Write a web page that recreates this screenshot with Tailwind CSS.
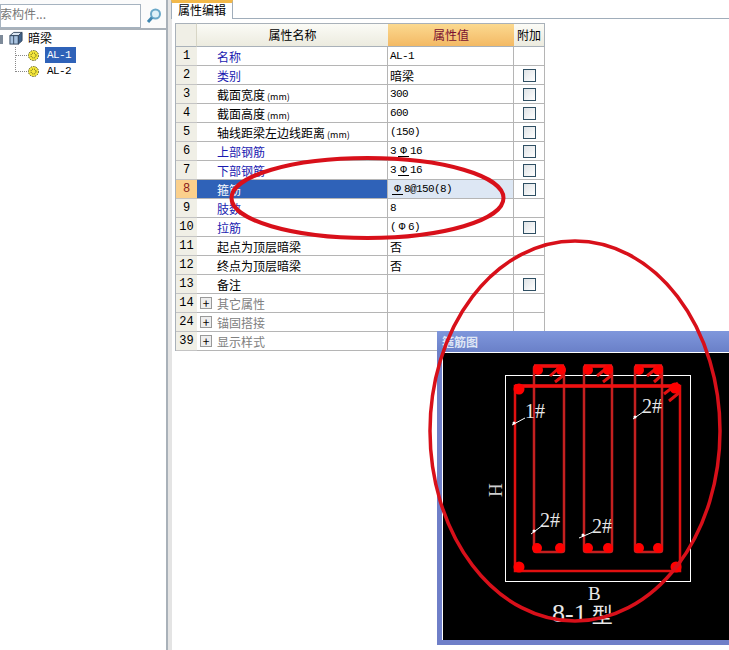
<!DOCTYPE html>
<html lang="en">
<head>
  <meta charset="UTF-8" />
  <title>属性编辑</title>
  <script src="https://cdn.jsdelivr.net/npm/@tailwindcss/browser@4"></script>
</head>
<body class="bg-white">
  <div class="relative w-[729px] h-[650px] overflow-hidden flex text-[12px] leading-[19px] text-black font-['Noto_Sans_CJK_SC',sans-serif]">

    <!-- left tree panel -->
    <div class="w-[166px] h-full shrink-0 flex flex-col">
      <div class="h-[30px] flex items-start bg-[#fbfbfb] border-b-2 border-[#a9b1b9]">
        <div class="w-[141px] h-[24px] mt-[4px] bg-white border border-[#a6b3c0] overflow-hidden whitespace-nowrap leading-[18px] text-[#777] -indent-[1px]">索构件...</div>
        <svg class="ml-[5px] mt-[8px]" width="16" height="16" viewBox="0 0 16 16"><circle cx="9.500" cy="6" r="4.500" fill="#dff1f8" stroke="#6aa8c8" stroke-width="2"/><path d="M6 9.500 L2 14" stroke="#3f86b0" stroke-width="3"/></svg>
      </div>
      <div class="relative flex-1">
        <div class="absolute left-0 top-[5px] w-[3px] h-[9px] bg-[#7d8a99]"></div>
        <div class="flex items-center h-[16px] pl-[9px] gap-[5px]">
          <svg width="14" height="14" viewBox="0 0 15 15"><path d="M1 5 L5 1.500 H14 L10 5 Z" fill="#dbe6f2" stroke="#33475f"/><rect x="1" y="5" width="9" height="9" fill="#a9c3e0" stroke="#33475f"/><path d="M10 5 L14 1.500 V10.500 L10 14 Z" fill="#41638c" stroke="#33475f"/><path d="M5 5 V14" stroke="#33475f"/></svg>
          <span class="text-[12px] -mt-[2px]">暗梁</span>
        </div>
        <div class="absolute left-[15px] top-[17px] h-[25px] w-[12px] border-l border-b border-dotted border-[#888]"></div>
        <div class="absolute left-[16px] top-[25px] w-[11px] border-b border-dotted border-[#888]"></div>
        <div class="flex items-center h-[16px] mt-[1px] pl-[28px] gap-[6px]">
          <svg width="11" height="11" viewBox="0 0 11 11"><circle cx="5.500" cy="5.500" r="5" fill="#f6e83c"/><circle cx="5.500" cy="5.500" r="5" fill="none" stroke="#5a5a20" stroke-width="1" stroke-dasharray="1.500 1"/><circle cx="5.500" cy="5.500" r="2.500" fill="#f6e83c" stroke="#4a4a18" stroke-width="1" stroke-dasharray="1 1"/></svg>
          <span class="bg-[#2f62b8] text-white h-[16px] w-[31px] leading-[16px] font-['Liberation_Mono',monospace] text-[11px] tracking-[-0.6px] pl-[2px]">AL-1</span>
        </div>
        <div class="flex items-center h-[16px] pl-[28px] gap-[6px]">
          <svg width="11" height="11" viewBox="0 0 11 11"><circle cx="5.500" cy="5.500" r="5" fill="#f6e83c"/><circle cx="5.500" cy="5.500" r="5" fill="none" stroke="#5a5a20" stroke-width="1" stroke-dasharray="1.500 1"/><circle cx="5.500" cy="5.500" r="2.500" fill="#f6e83c" stroke="#4a4a18" stroke-width="1" stroke-dasharray="1 1"/></svg>
          <span class="w-[31px] leading-[16px] font-['Liberation_Mono',monospace] text-[11px] tracking-[-0.6px] pl-[2px]">AL-2</span>
        </div>
      </div>
    </div>

    <!-- splitter -->
    <div class="w-[6px] h-full bg-[#e4e4e4] border-l-2 border-[#a9b1b9]"></div>

    <!-- property editor -->
    <div class="flex-1 flex flex-col">
      <div class="h-[19px] flex border-b border-[#a0adba]">
        <div class="-ml-[1px] w-[62px] h-[19px] bg-white border-x border-[#a0adba] border-t-[3px] border-t-[#f2b84a] pl-[6px] leading-[13px] text-[12px]">属性编辑</div>
      </div>
      <div class="pl-[3px] pt-[4px]">
        <div class="w-[370px] grid grid-cols-[21px_191px_126px_31px] border-l border-[#a9b1b9]">
          <div class="h-[24px] bg-[#f0efe6] border-y border-[#a9b1b9] border-r border-r-[#d8d6c6]"></div>
          <div class="h-[24px] bg-gradient-to-b from-[#fbfbf6] to-[#ecebdf] border-y border-[#a9b1b9] text-center leading-[22px]">属性名称</div>
          <div class="h-[24px] bg-gradient-to-b from-[#fbd98f] to-[#f3b964] border-y border-[#a9b1b9] text-center leading-[22px] text-[#7a1030]">属性值</div>
          <div class="h-[24px] bg-gradient-to-b from-[#fbfbf6] to-[#ecebdf] border-y border-r border-[#a9b1b9] text-center leading-[22px]">附加</div>

          <!-- row 1 -->
          <div class="h-[19px] bg-[#f0efe6] border-b border-[#c4c4c4] text-center font-['Liberation_Mono',monospace]">1</div>
          <div class="h-[19px] border-b border-r border-[#b5b5b5] pl-[20px] text-[#1a1ab0]">名称</div>
          <div class="h-[19px] border-b border-r border-[#b5b5b5] pl-[2px] font-['Liberation_Mono',monospace] text-[11px] tracking-[-0.6px]">AL-1</div>
          <div class="h-[19px] border-b border-r border-[#b5b5b5]"></div>
          <!-- row 2 -->
          <div class="h-[19px] bg-[#f0efe6] border-b border-[#c4c4c4] text-center font-['Liberation_Mono',monospace]">2</div>
          <div class="h-[19px] border-b border-r border-[#b5b5b5] pl-[20px] text-[#1a1ab0]">类别</div>
          <div class="h-[19px] border-b border-r border-[#b5b5b5] pl-[2px]">暗梁</div>
          <div class="h-[19px] border-b border-r border-[#b5b5b5] flex items-center justify-center"><span class="w-[13px] h-[13px] border border-[#2f4f63] bg-gradient-to-br from-[#dfe3e6] to-white"></span></div>
          <!-- row 3 -->
          <div class="h-[19px] bg-[#f0efe6] border-b border-[#c4c4c4] text-center font-['Liberation_Mono',monospace]">3</div>
          <div class="h-[19px] border-b border-r border-[#b5b5b5] pl-[20px]">截面宽度<span class="ml-[2px] text-[9px]">(mm)</span></div>
          <div class="h-[19px] border-b border-r border-[#b5b5b5] pl-[2px] font-['Liberation_Mono',monospace] text-[11px] tracking-[-0.6px]">300</div>
          <div class="h-[19px] border-b border-r border-[#b5b5b5] flex items-center justify-center"><span class="w-[13px] h-[13px] border border-[#2f4f63] bg-gradient-to-br from-[#dfe3e6] to-white"></span></div>
          <!-- row 4 -->
          <div class="h-[19px] bg-[#f0efe6] border-b border-[#c4c4c4] text-center font-['Liberation_Mono',monospace]">4</div>
          <div class="h-[19px] border-b border-r border-[#b5b5b5] pl-[20px]">截面高度<span class="ml-[2px] text-[9px]">(mm)</span></div>
          <div class="h-[19px] border-b border-r border-[#b5b5b5] pl-[2px] font-['Liberation_Mono',monospace] text-[11px] tracking-[-0.6px]">600</div>
          <div class="h-[19px] border-b border-r border-[#b5b5b5] flex items-center justify-center"><span class="w-[13px] h-[13px] border border-[#2f4f63] bg-gradient-to-br from-[#dfe3e6] to-white"></span></div>
          <!-- row 5 -->
          <div class="h-[19px] bg-[#f0efe6] border-b border-[#c4c4c4] text-center font-['Liberation_Mono',monospace]">5</div>
          <div class="h-[19px] border-b border-r border-[#b5b5b5] pl-[20px]">轴线距梁左边线距离<span class="ml-[2px] text-[9px]">(mm)</span></div>
          <div class="h-[19px] border-b border-r border-[#b5b5b5] pl-[2px] font-['Liberation_Mono',monospace] text-[11px] tracking-[-0.6px]">(150)</div>
          <div class="h-[19px] border-b border-r border-[#b5b5b5] flex items-center justify-center"><span class="w-[13px] h-[13px] border border-[#2f4f63] bg-gradient-to-br from-[#dfe3e6] to-white"></span></div>
          <!-- row 6 -->
          <div class="h-[19px] bg-[#f0efe6] border-b border-[#c4c4c4] text-center font-['Liberation_Mono',monospace]">6</div>
          <div class="h-[19px] border-b border-r border-[#b5b5b5] pl-[20px] text-[#1a1ab0]">上部钢筋</div>
          <div class="h-[19px] border-b border-r border-[#b5b5b5] pl-[2px] font-['Liberation_Mono',monospace] text-[11px] tracking-[-0.6px]">3<span class="inline-block w-[11px] h-[11px] ml-[2px] mr-[1px] leading-[10px] text-center border-b border-black tracking-normal">Φ</span>16</div>
          <div class="h-[19px] border-b border-r border-[#b5b5b5] flex items-center justify-center"><span class="w-[13px] h-[13px] border border-[#2f4f63] bg-gradient-to-br from-[#dfe3e6] to-white"></span></div>
          <!-- row 7 -->
          <div class="h-[19px] bg-[#f0efe6] border-b border-[#c4c4c4] text-center font-['Liberation_Mono',monospace]">7</div>
          <div class="h-[19px] border-b border-r border-[#b5b5b5] pl-[20px] text-[#1a1ab0]">下部钢筋</div>
          <div class="h-[19px] border-b border-r border-[#b5b5b5] pl-[2px] font-['Liberation_Mono',monospace] text-[11px] tracking-[-0.6px]">3<span class="inline-block w-[11px] h-[11px] ml-[2px] mr-[1px] leading-[10px] text-center border-b border-black tracking-normal">Φ</span>16</div>
          <div class="h-[19px] border-b border-r border-[#b5b5b5] flex items-center justify-center"><span class="w-[13px] h-[13px] border border-[#2f4f63] bg-gradient-to-br from-[#dfe3e6] to-white"></span></div>
          <!-- row 8, selected -->
          <div class="h-[19px] bg-[#fbd08c] border-b border-[#c4c4c4] text-center font-['Liberation_Mono',monospace] text-[#8a1c1c]">8</div>
          <div class="h-[19px] bg-[#2f62b8] border-b border-r border-[#b5b5b5] pl-[20px] text-white">箍筋</div>
          <div class="h-[19px] bg-[#dde7f4] border-b border-r border-[#b5b5b5] pl-[4px] font-['Liberation_Mono',monospace] text-[11px] tracking-[-0.6px]"><span class="inline-block w-[11px] h-[11px] mr-[1px] leading-[10px] text-center border-b border-black tracking-normal">Φ</span>8@150(8)</div>
          <div class="h-[19px] border-b border-r border-[#b5b5b5] flex items-center justify-center"><span class="w-[13px] h-[13px] border border-[#2f4f63] bg-gradient-to-br from-[#dfe3e6] to-white"></span></div>
          <!-- row 9 -->
          <div class="h-[19px] bg-[#f0efe6] border-b border-[#c4c4c4] text-center font-['Liberation_Mono',monospace]">9</div>
          <div class="h-[19px] border-b border-r border-[#b5b5b5] pl-[20px] text-[#1a1ab0]">肢数</div>
          <div class="h-[19px] border-b border-r border-[#b5b5b5] pl-[2px] font-['Liberation_Mono',monospace] text-[11px] tracking-[-0.6px]">8</div>
          <div class="h-[19px] border-b border-r border-[#b5b5b5]"></div>
          <!-- row 10 -->
          <div class="h-[19px] bg-[#f0efe6] border-b border-[#c4c4c4] text-center font-['Liberation_Mono',monospace]">10</div>
          <div class="h-[19px] border-b border-r border-[#b5b5b5] pl-[20px] text-[#1a1ab0]">拉筋</div>
          <div class="h-[19px] border-b border-r border-[#b5b5b5] pl-[2px] font-['Liberation_Mono',monospace] text-[11px] tracking-[-0.6px]">(<span class="inline-block w-[12px] text-center tracking-normal">Φ</span>6)</div>
          <div class="h-[19px] border-b border-r border-[#b5b5b5] flex items-center justify-center"><span class="w-[13px] h-[13px] border border-[#2f4f63] bg-gradient-to-br from-[#dfe3e6] to-white"></span></div>
          <!-- row 11 -->
          <div class="h-[19px] bg-[#f0efe6] border-b border-[#c4c4c4] text-center font-['Liberation_Mono',monospace]">11</div>
          <div class="h-[19px] border-b border-r border-[#b5b5b5] pl-[20px]">起点为顶层暗梁</div>
          <div class="h-[19px] border-b border-r border-[#b5b5b5] pl-[2px]">否</div>
          <div class="h-[19px] border-b border-r border-[#b5b5b5]"></div>
          <!-- row 12 -->
          <div class="h-[19px] bg-[#f0efe6] border-b border-[#c4c4c4] text-center font-['Liberation_Mono',monospace]">12</div>
          <div class="h-[19px] border-b border-r border-[#b5b5b5] pl-[20px]">终点为顶层暗梁</div>
          <div class="h-[19px] border-b border-r border-[#b5b5b5] pl-[2px]">否</div>
          <div class="h-[19px] border-b border-r border-[#b5b5b5]"></div>
          <!-- row 13 -->
          <div class="h-[19px] bg-[#f0efe6] border-b border-[#c4c4c4] text-center font-['Liberation_Mono',monospace]">13</div>
          <div class="h-[19px] border-b border-r border-[#b5b5b5] pl-[20px]">备注</div>
          <div class="h-[19px] border-b border-r border-[#b5b5b5]"></div>
          <div class="h-[19px] border-b border-r border-[#b5b5b5] flex items-center justify-center"><span class="w-[13px] h-[13px] border border-[#2f4f63] bg-gradient-to-br from-[#dfe3e6] to-white"></span></div>
          <!-- group rows -->
          <div class="h-[19px] bg-[#f0efe6] border-b border-[#c4c4c4] text-center font-['Liberation_Mono',monospace]">14</div>
          <div class="h-[19px] border-b border-r border-[#b5b5b5] pl-[3px] flex items-center gap-[5px] text-[#808080]"><span class="w-[12px] h-[12px] border border-[#999] bg-[#eee] text-black flex items-center justify-center leading-none">+</span>其它属性</div>
          <div class="h-[19px] border-b border-r border-[#b5b5b5]"></div>
          <div class="h-[19px] border-b border-r border-[#b5b5b5]"></div>
          <div class="h-[19px] bg-[#f0efe6] border-b border-[#c4c4c4] text-center font-['Liberation_Mono',monospace]">24</div>
          <div class="h-[19px] border-b border-r border-[#b5b5b5] pl-[3px] flex items-center gap-[5px] text-[#808080]"><span class="w-[12px] h-[12px] border border-[#999] bg-[#eee] text-black flex items-center justify-center leading-none">+</span>锚固搭接</div>
          <div class="h-[19px] border-b border-r border-[#b5b5b5]"></div>
          <div class="h-[19px] border-b border-r border-[#b5b5b5]"></div>
          <div class="h-[19px] bg-[#f0efe6] border-b border-[#c4c4c4] text-center font-['Liberation_Mono',monospace]">39</div>
          <div class="h-[19px] border-b border-r border-[#b5b5b5] pl-[3px] flex items-center gap-[5px] text-[#808080]"><span class="w-[12px] h-[12px] border border-[#999] bg-[#eee] text-black flex items-center justify-center leading-none">+</span>显示样式</div>
          <div class="h-[19px] border-b border-r border-[#b5b5b5]"></div>
          <div class="h-[19px] border-b border-r border-[#b5b5b5]"></div>
        </div>
      </div>
    </div>

    <!-- floating stirrup window -->
    <div class="absolute left-[437px] top-[331px] w-[300px] h-[314px] bg-[#6f7fc8] flex flex-col pl-[5px] pb-[5px]">
      <div class="h-[21px] -ml-[5px] pl-[5px] bg-gradient-to-b from-[#7f97dc] to-[#6a80c8] text-[#dfe6f5] font-bold leading-[21px]">箍筋图</div>
      <div class="flex-1 bg-black border-t border-l border-white"></div>
    </div>

    <!-- drawing and hand-drawn marks over the window -->
    <svg class="absolute left-0 top-0" width="729" height="650" viewBox="0 0 729 650" fill="none">
      <rect x="505.500" y="375.500" width="185" height="206" stroke="#fff"/>
      <g stroke-width="2.500">
        <rect x="515" y="386" width="165" height="185" stroke="#e01010"/>
        <rect x="534" y="366" width="30" height="186" rx="2" stroke="#c42020"/>
        <rect x="584" y="366" width="28" height="186" rx="2" stroke="#c42020"/>
        <rect x="635" y="366" width="27" height="186" rx="2" stroke="#c42020"/>
      </g>
      <path d="M534 366 H564 M584 366 H612 M635 366 H662 M515 386 H680" stroke="#f01010" stroke-width="3.500"/>
      <path d="M550 376 L560 367 M555 382 L564 375 M597 376 L608 367 M603 382 L612 375 M647 376 L658 367 M654 382 L662 375 M664 394 L678 383 M669 401 L680 392" stroke="#e01010" stroke-width="3"/>
      <g fill="#ff0000">
        <circle cx="519" cy="389" r="5.500"/><circle cx="675" cy="388" r="5.500"/><circle cx="519" cy="567" r="5.500"/><circle cx="676" cy="567" r="5.500"/>
        <circle cx="538" cy="370" r="5"/><circle cx="561" cy="370" r="5"/><circle cx="588" cy="370" r="5"/><circle cx="608" cy="370" r="5"/><circle cx="639" cy="370" r="5"/><circle cx="658" cy="370" r="5"/>
        <circle cx="537" cy="548" r="5"/><circle cx="560" cy="548" r="5"/><circle cx="588" cy="548" r="5"/><circle cx="608" cy="548" r="5"/><circle cx="639" cy="548" r="5"/><circle cx="658" cy="548" r="5"/>
      </g>
      <path d="M512 425 L525 418 M633 419 L643 412 M531 534 L543 525 M579 538 L593 532" stroke="#fff"/>
      <g fill="#fff">
        <circle cx="514" cy="423" r="1.500"/><circle cx="635" cy="417" r="1.500"/><circle cx="534" cy="531" r="1.500"/><circle cx="583" cy="535" r="1.500"/>
      </g>
      <g fill="#e8e8e8" font-family="Liberation Serif, serif">
        <text x="525" y="418" font-size="20">1#</text>
        <text x="642" y="413" font-size="20">2#</text>
        <text x="540" y="527" font-size="20">2#</text>
        <text x="592" y="533" font-size="20">2#</text>
        <text x="588" y="600" font-size="19">B</text>
        <text x="552" y="622" font-size="26">8-1<tspan dx="5" font-family="Noto Sans CJK SC, sans-serif" font-size="21">型</tspan></text>
        <text transform="translate(502 497) rotate(-90)" font-size="19" fill="#cfcfcf">H</text>
      </g>
      <ellipse cx="367.500" cy="198" rx="136" ry="40" stroke="#d8101a" stroke-width="4"/>
      <ellipse cx="575" cy="431" rx="145" ry="190" stroke="#d8101a" stroke-width="3.500"/>
    </svg>
  </div>
</body>
</html>
